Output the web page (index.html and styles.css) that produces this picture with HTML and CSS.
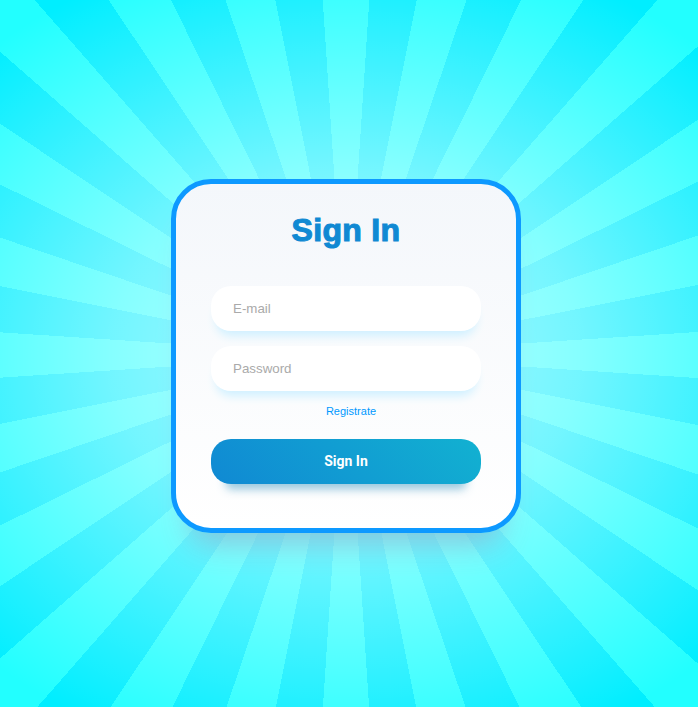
FILE: index.html
```html
<!DOCTYPE html>
<html lang="en">
<head>
<meta charset="utf-8">
<title>Sign In</title>
<link rel="stylesheet" href="styles.css">
</head>
<body>
<main class="page">
  <div class="card">
    <h1 class="heading">Sign In</h1>
    <form class="form" action="#">
      <input class="input" type="email" placeholder="E-mail">
      <input class="input" type="password" placeholder="Password">
      <span class="register"><a href="#">Registrate</a></span>
      <button class="login-button" type="button">Sign In</button>
    </form>
  </div>
</main>
</body>
</html>
```
FILE: styles.css
```css
html, body {
  margin: 0;
  padding: 0;
  height: 100%;
}

body {
  font-family: "Liberation Sans", Arial, sans-serif;
  background:
    radial-gradient(ellipse 520px 420px at 346px 355px,
      rgba(255,255,255,0.72) 0%,
      rgba(255,255,255,0.45) 45%,
      rgba(255,255,255,0) 100%),
    repeating-conic-gradient(from -3.75deg at 346px 355px,
      #22ffff 0deg 7.5deg,
      #00eeff 7.5deg 15deg);
  overflow: hidden;
}

.page {
  box-sizing: border-box;
  min-height: 100vh;
  padding: 5px 6px 0 0;
  display: flex;
  align-items: center;
  justify-content: center;
}

.card {
  box-sizing: border-box;
  width: 350px;
  padding: 25px 35px 24px;
  border: 5px solid #0d99ff;
  border-radius: 40px;
  background: linear-gradient(0deg, #ffffff 0%, #f4f7fb 100%);
  box-shadow: rgba(133, 189, 215, 0.88) 0 30px 30px -20px;
}

.heading {
  margin: 0;
  text-align: center;
  font-family: "Liberation Sans", Arial, sans-serif;
  font-weight: 900;
  font-size: 32px;
  line-height: 42px;
  letter-spacing: 0.3px;
  color: #1089d3;
  -webkit-text-stroke: 1.1px #1089d3;
}

.form {
  margin-top: 20px;
  display: flex;
  flex-direction: column;
}

.input {
  box-sizing: border-box;
  width: 100%;
  height: 45px;
  margin: 15px 0 0;
  padding: 15px 20px;
  border: none;
  border-inline: 2px solid transparent;
  border-radius: 20px;
  background: #ffffff;
  font-family: "Liberation Sans", Arial, sans-serif;
  font-size: 13.33px;
  line-height: 15px;
  color: #333;
  box-shadow: #cff0ff 0 10px 10px -5px;
  outline: none;
}

.input::placeholder {
  color: #aaaaaa;
}

.register {
  display: block;
  margin: 10px 0 0 10px;
  height: 18px;
  line-height: 18px;
  text-align: center;
}

.register a {
  font-size: 11px;
  color: #0099ff;
  text-decoration: none;
}

.login-button {
  display: block;
  width: 100%;
  height: 45px;
  margin: 20px 0;
  padding: 15px 0;
  border: none;
  border-radius: 20px;
  background: linear-gradient(45deg, #1089d3 0%, #12b1d1 100%);
  color: #ffffff;
  font-family: Roboto, "Liberation Sans", sans-serif;
  font-weight: 700;
  font-size: 14px;
  line-height: 15px;
  box-shadow: rgba(133, 189, 215, 0.88) 0 20px 10px -15px;
  cursor: pointer;
}
```
